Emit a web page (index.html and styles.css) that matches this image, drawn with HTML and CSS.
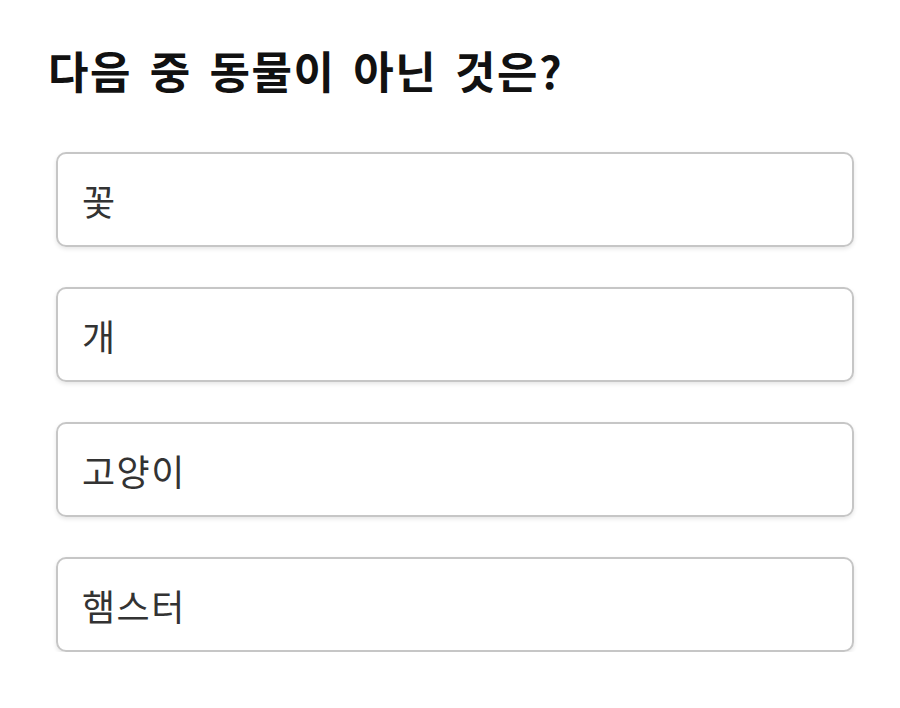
FILE: index.html
```html
<!DOCTYPE html>
<html lang="ko">
<head>
    <meta charset="UTF-8">
    <meta name="viewport" content="width=device-width, initial-scale=1.0">
    <title>퀴즈</title>
    <link rel="stylesheet" href="styles.css">
</head>
<body>

<div class="quiz">
    <h1 class="question">다음 중 동물이 아닌 것은?</h1>

    <!-- 보기 -->
    <ul class="options">
        <li class="option">꽃</li>
        <li class="option">개</li>
        <li class="option">고양이</li>
        <li class="option">햄스터</li>
    </ul>
</div>

</body>
</html>
```

FILE: styles.css
```css
body {
    margin: 0;
    padding: 0;
    background-color: #ffffff;
    font-family: "Noto Sans CJK KR", "Noto Sans", sans-serif;
}
.quiz {
    padding: 36px 46px 0 48px;
}
.question {
    margin: 0;
    font-size: 44px;
    font-weight: bold;
    line-height: 68px;
    letter-spacing: 1.5px;
    word-spacing: 4px;
    color: #111;
}
.options {
    list-style-type: none;
    margin: 48px 0 0 0;
    padding: 0 0 0 8px;
    display: flex;
    flex-direction: column;
    gap: 40px;
}
.option {
    height: 91px;
    display: flex;
    align-items: center;
    padding: 0 24px;
    border: 2px solid #c6c6c6;
    border-radius: 10px;
    box-shadow: 0 2px 4px rgba(0, 0, 0, 0.1);
    font-size: 36px;
    letter-spacing: 1.5px;
    color: #333;
}
```
